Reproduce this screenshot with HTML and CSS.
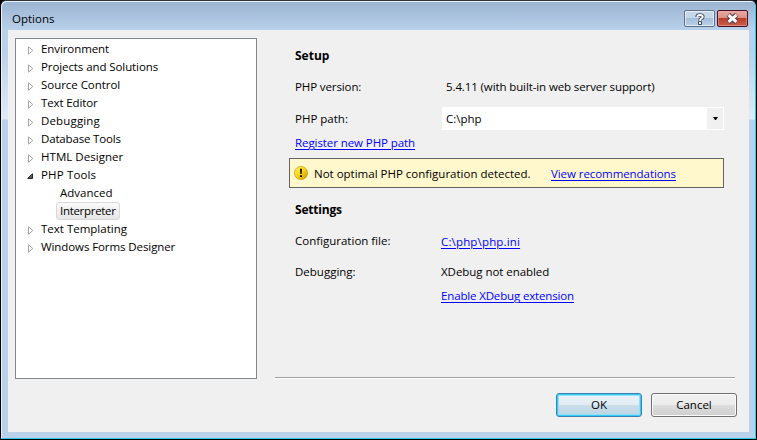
FILE: index.html
```
<!DOCTYPE html>
<html lang="en">
<head>
<meta charset="utf-8">
<title>Options</title>
<link rel="stylesheet" href="styles.css">
</head>
<body>
<div class="window">
  <header class="titlebar">
    <span class="title">Options</span>
    <div class="caption-buttons">
      <button class="cap help" aria-label="Help"><svg width="12" height="14" viewBox="0 0 12 14"><path d="M3.2 5V4.6Q3.2 3 6 3T8.8 4.8Q8.8 6 7.2 6.6Q6 7.2 6 8.6" fill="none" stroke="#424b5e" stroke-width="3.6"/><rect x="4" y="9" width="4" height="4" rx="1" fill="#424b5e"/><path d="M3.2 4.9Q3.4 3 6 3T8.8 4.8Q8.8 6 7.2 6.6Q6 7.2 6 9" fill="none" stroke="#fff" stroke-width="1.8"/><rect x="5" y="10" width="2" height="2" fill="#fff"/></svg></button>
      <button class="cap close" aria-label="Close"><svg width="13" height="11" viewBox="0 0 12 10"><path d="M2.2 1.6L9.8 8.4M9.8 1.6L2.2 8.4" stroke="#50404c" stroke-width="4.6"/><path d="M2.4 1.8L9.6 8.2M9.6 1.8L2.4 8.2" stroke="#fff" stroke-width="2.7"/></svg></button>
    </div>
  </header>
  <main class="client">
    <ul class="tree">
      <li><svg class="arrow" viewBox="0 0 6 9"><path d="M.5 .8V8.2L4.8 4.5Z"/></svg><span class="t1">Environment</span></li>
      <li><svg class="arrow" viewBox="0 0 6 9"><path d="M.5 .8V8.2L4.8 4.5Z"/></svg><span class="t2">Projects and Solutions</span></li>
      <li><svg class="arrow" viewBox="0 0 6 9"><path d="M.5 .8V8.2L4.8 4.5Z"/></svg><span class="t3">Source Control</span></li>
      <li><svg class="arrow" viewBox="0 0 6 9"><path d="M.5 .8V8.2L4.8 4.5Z"/></svg><span class="t4">Text Editor</span></li>
      <li><svg class="arrow" viewBox="0 0 6 9"><path d="M.5 .8V8.2L4.8 4.5Z"/></svg><span class="t5">Debugging</span></li>
      <li><svg class="arrow" viewBox="0 0 6 9"><path d="M.5 .8V8.2L4.8 4.5Z"/></svg><span class="t6">Database Tools</span></li>
      <li><svg class="arrow" viewBox="0 0 6 9"><path d="M.5 .8V8.2L4.8 4.5Z"/></svg><span class="t7">HTML Designer</span></li>
      <li><svg class="arrow open" viewBox="0 0 6 6"><path d="M5.5 .7V5.5H.7Z"/></svg><span class="t8">PHP Tools</span></li>
      <li class="child"><span class="t9">Advanced</span></li>
      <li class="child"><span class="t10 selected">Interpreter</span></li>
      <li><svg class="arrow" viewBox="0 0 6 9"><path d="M.5 .8V8.2L4.8 4.5Z"/></svg><span class="t11">Text Templating</span></li>
      <li><svg class="arrow" viewBox="0 0 6 9"><path d="M.5 .8V8.2L4.8 4.5Z"/></svg><span class="t12">Windows Forms Designer</span></li>
    </ul>
    <section class="page">
      <h2 class="setup"><span>Setup</span></h2>
      <div class="row version"><span class="label">PHP version:</span><span class="value">5.4.11 (with built-in web server support)</span></div>
      <div class="row path"><span class="label">PHP path:</span>
        <div class="combo"><span>C:\php</span><i class="drop"><svg width="5" height="3" viewBox="0 0 5 3"><path d="M0 0H5L3 3H2Z"/></svg></i></div>
      </div>
      <div class="row register"><a>Register new PHP path</a></div>
      <div class="alert">
        <svg class="warn" width="14" height="14" viewBox="0 0 14 14">
          <defs><linearGradient id="gold" x1="0" y1="0" x2="1" y2="1"><stop offset="0" stop-color="#fff36a"/><stop offset=".5" stop-color="#f8d414"/><stop offset="1" stop-color="#c58e00"/></linearGradient></defs>
          <circle cx="7" cy="7" r="6.6" fill="url(#gold)" stroke="#c99c1c" stroke-width=".7"/>
          <path d="M6 2.8H8L7.7 8H6.3ZM6 9.2H8V11H6Z" fill="#111"/>
        </svg>
        <span class="message">Not optimal PHP configuration detected.</span><a>View recommendations</a>
      </div>
      <h2 class="settings"><span>Settings</span></h2>
      <div class="row config"><span class="label">Configuration file:</span><a>C:\php\php.ini</a></div>
      <div class="row debugging"><span class="label">Debugging:</span><span class="value">XDebug not enabled</span></div>
      <div class="row enable"><a>Enable XDebug extension</a></div>
    </section>
    <footer class="actions">
      <button class="btn default"><span>OK</span></button>
      <button class="btn"><span>Cancel</span></button>
    </footer>
  </main>
</div>
</body>
</html>
```
FILE: styles.css
```
* { box-sizing: border-box; }
body { margin: 0; background: #000; overflow: hidden; font: 11.5px/18px "Open Sans", "Noto Sans", sans-serif; color: #000; }
button { font: inherit; padding: 0; color: inherit; }
.window { width: 757px; height: 440px; border: 1px solid #000; border-top-color: #30343b; border-radius: 6px 6px 0 0; padding: 0 6px 6px; background: linear-gradient(#9ab3d1 0, #b9d1ea 29px, #b9d1ea 50px, #dfebf7 118px, #b9d1ea 119px); box-shadow: inset -1px -1px #25cce5, inset 1px 1px #e8f2fb; }
.titlebar { height: 29px; display: flex; justify-content: space-between; padding: 9px 2px 0 5px; }
.title { line-height: 18px; }
.caption-buttons { display: flex; gap: 2px; }
.cap { width: 31px; height: 17px; display: flex; align-items: center; justify-content: center; border: 1px solid #5c708e; border-radius: 2px; box-shadow: inset 0 0 0 1px #ffffff99; background: linear-gradient(#c5d7eb 0 48%, #a6bfdc 50%, #b9d0e8); }
.close { border-color: #431422; box-shadow: inset 0 0 0 1px #f0aaa088; background: linear-gradient(#e9aaa2 0, #dd8d82 48%, #bd3b29 50%, #c85f4c); }
.client { height: 402px; margin: 0 1px; background: #f0f0f0; display: grid; grid-template-columns: 242px 461px; column-gap: 18px; grid-template-rows: 341px 1fr; padding: 8px 0 0 7px; }
.tree { margin: 0; padding: 1px 0 0 12px; list-style: none; border: 1px solid #828790; background: #fff; }
.tree li { height: 18px; display: flex; align-items: center; white-space: nowrap; }
.arrow { width: 6px; height: 9px; margin: 2px 7px 0 0; fill: #fff; stroke: #a6a6a6; stroke-width: 1; }
.arrow.open { height: 6px; margin-top: 1px; margin-left: -1px; margin-right: 8px; fill: #595959; stroke: #262626; }
.tree .child { padding-left: 32px; }
.tree .selected { height: 18px; line-height: 16px; margin-left: -4px; padding: 0 3px; border: 1px solid #d9d9d9; border-radius: 3px; background: linear-gradient(#fafafa, #e6e6e6); }
.t1, .t2, .t12 { letter-spacing: -.09px; }
.t3 { letter-spacing: -.04px; }
.t4 { letter-spacing: -.13px; }
.t5, .t8 { letter-spacing: .15px; }
.t6 { letter-spacing: -.17px; }
.t7 { letter-spacing: .04px; }
.t10 { letter-spacing: -.3px; }
.page { padding: 8px 0 0 20px; border-bottom: 1px solid #a0a0a0; box-shadow: 0 1px #fff; white-space: nowrap; width: 460px; margin-bottom: 1px; }
h2 { margin: 0; font-size: 12px; font-weight: 700; line-height: 20px; height: 20px; }
.row { display: flex; height: 20px; line-height: 20px; }
.label { width: 146px; flex: none; }
.version { margin-top: 11px; letter-spacing: -.11px; }
.version .value { padding-left: 5px; }
.path { margin-top: 10px; height: 23px; line-height: 24px; }
.combo { width: 282px; margin-left: 1px; padding: 1px 1px 1px 4px; display: flex; justify-content: space-between; background: #fff; }
.combo span { line-height: 22px; }
.drop { width: 16px; display: flex; align-items: center; justify-content: center; background: #f0f0f0; }
.register { margin-top: 3px; letter-spacing: -.08px; }
a { color: #00f; text-decoration: underline; text-underline-offset: 2px; text-decoration-thickness: 1px; }
.alert { width: 435px; height: 30px; margin: 5px 0 0 -6px; padding-left: 4px; display: flex; align-items: center; border: 1px solid #646464; background: #fff8cd; }
.message { width: 237px; margin-left: 6px; }
.message, .alert a { padding-top: 2px; }
.alert a { letter-spacing: -.07px; }
.settings { margin-top: 12px; letter-spacing: -.2px; }
.config { margin-top: 11px; }
.config a { padding-top: 1px; letter-spacing: .16px; }
.debugging { margin-top: 11px; }
.debugging .value { letter-spacing: -.05px; }
.enable { margin-top: 4px; padding-left: 146px; letter-spacing: -.15px; }
.actions { grid-column: 1 / -1; display: flex; justify-content: flex-end; gap: 9px; padding: 14px 0 0; margin-right: -1px; }
.btn { width: 86px; height: 24px; border: 1px solid #707070; border-radius: 3px; box-shadow: inset 0 0 0 1px #fcfcfc; background: linear-gradient(#f2f2f2, #ebebeb 49%, #dddddd 50%, #cfcfcf); }
.default { border-color: #3c7fb1; box-shadow: inset 0 0 0 1px #35cdf5, inset 0 0 0 2px #94dff5; background: linear-gradient(#eef4f8, #e0ebf2 49%, #cbdeea 50%, #bcd5e2); }
```
